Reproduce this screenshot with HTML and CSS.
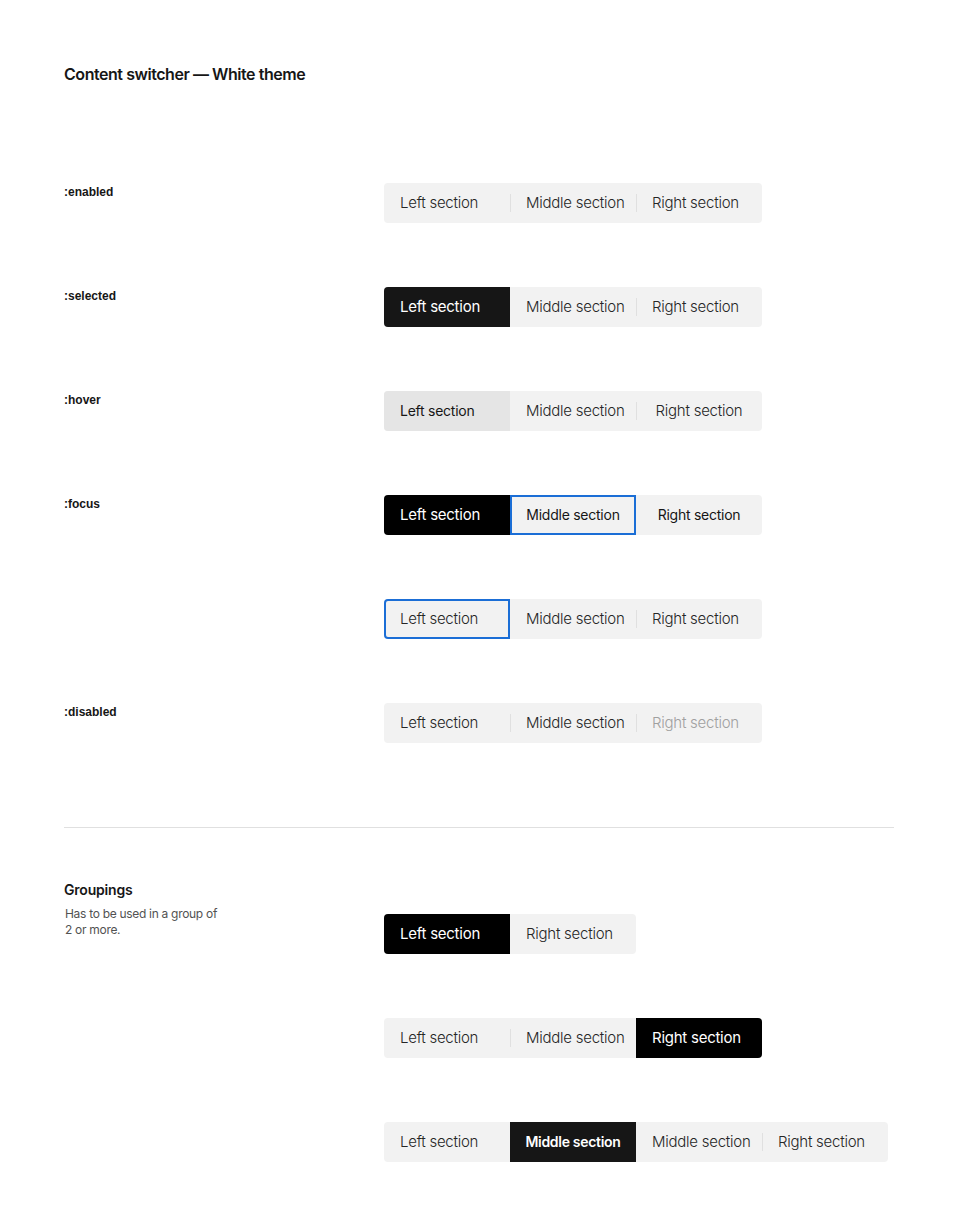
FILE: index.html
```html
<!DOCTYPE html>
<html lang="en">
  <head>
    <meta charset="UTF-8" />
    <meta name="viewport" content="width=device-width, initial-scale=1.0" />
    <title>Content switcher — White theme</title>
    <link rel="stylesheet" href="styles.css">
  </head>
  <body>
    <main class="page">
      <h1 class="title">Content switcher — White theme</h1>

      <section class="states">
        <div class="state-label">:enabled</div>
        <div class="switcher">
          <span class="seg">Left section</span>
          <span class="seg sep">Middle section</span>
          <span class="seg sep">Right section</span>
        </div>

        <div class="state-label">:selected</div>
        <div class="switcher">
          <span class="seg selected">Left section</span>
          <span class="seg">Middle section</span>
          <span class="seg sep">Right section</span>
        </div>

        <div class="state-label">:hover</div>
        <div class="switcher">
          <span class="seg hover">Left section</span>
          <span class="seg">Middle section</span>
          <span class="seg sep center">Right section</span>
        </div>

        <div class="state-label">:focus</div>
        <div class="switcher">
          <span class="seg selected black">Left section</span>
          <span class="seg focus center regular">Middle section</span>
          <span class="seg center regular">Right section</span>
        </div>

        <div class="state-label"></div>
        <div class="switcher">
          <span class="seg focus">Left section</span>
          <span class="seg">Middle section</span>
          <span class="seg sep">Right section</span>
        </div>

        <div class="state-label">:disabled</div>
        <div class="switcher">
          <span class="seg">Left section</span>
          <span class="seg sep">Middle section</span>
          <span class="seg sep disabled">Right section</span>
        </div>
      </section>

      <hr class="divider" />

      <section class="groupings">
        <div class="group-info">
          <h2>Groupings</h2>
          <p>Has to be used in a group of<br />2 or more.</p>
        </div>
        <div class="group-list">
          <div class="switcher">
            <span class="seg selected black">Left section</span>
            <span class="seg">Right section</span>
          </div>
          <div class="switcher">
            <span class="seg">Left section</span>
            <span class="seg sep">Middle section</span>
            <span class="seg selected black">Right section</span>
          </div>
          <div class="switcher">
            <span class="seg">Left section</span>
            <span class="seg selected center bold">Middle section</span>
            <span class="seg">Middle section</span>
            <span class="seg sep">Right section</span>
          </div>
        </div>
      </section>
    </main>
  </body>
</html>
```

FILE: styles.css
```css
* {
  box-sizing: border-box;
}

body {
  margin: 0;
  background-color: #ffffff;
  color: #161616;
  font-family: Inter, "Noto Sans", sans-serif;
}

.page {
  padding: 64px 64px 60px 64px;
}

.title {
  margin: 0;
  font-size: 16px;
  line-height: 20px;
  font-weight: 600;
  letter-spacing: -0.45px;
}

.states {
  margin-top: 99px;
  display: grid;
  grid-template-columns: 320px 1fr;
  row-gap: 64px;
}

.state-label {
  font-family: "Liberation Sans", Arial, sans-serif;
  font-size: 12px;
  font-weight: 700;
  line-height: 16px;
  padding-top: 1px;
  color: #161616;
}

/* switcher */
.switcher {
  display: flex;
  width: max-content;
  height: 40px;
  background-color: #f2f2f2;
  border-radius: 4px;
}

.seg {
  position: relative;
  display: flex;
  align-items: center;
  width: 126px;
  height: 40px;
  padding: 0 16px 2px 16px;
  font-size: 15px;
  font-weight: 300;
  letter-spacing: -0.25px;
  color: #262626;
  white-space: nowrap;
}

.seg:first-child {
  border-radius: 4px 0 0 4px;
}

.seg:last-child {
  border-radius: 0 4px 4px 0;
}

.seg.sep::before {
  content: "";
  position: absolute;
  left: 0;
  top: 11px;
  height: 18px;
  width: 1px;
  background-color: #e0e0e0;
}

.seg.center {
  justify-content: center;
  padding: 0 0 2px 0;
}

.seg.regular {
  font-size: 14px;
  font-weight: 400;
  color: #161616;
}

.seg.selected {
  background-color: #161616;
  color: #ffffff;
  font-weight: 400;
}

.seg.black {
  background-color: #000000;
}

.seg.bold {
  font-size: 14px;
  font-weight: 600;
  letter-spacing: -0.3px;
}

.seg.hover {
  background-color: #e5e5e5;
  font-size: 14px;
  font-weight: 400;
  color: #161616;
}

.seg.focus {
  box-shadow: inset 0 0 0 2px #1b6ed6;
}

.seg.disabled {
  color: #a0a0a0;
}

.divider {
  margin: 84px 0 0 0;
  border: 0;
  height: 1px;
  background-color: #e0e0e0;
}

.groupings {
  margin-top: 53px;
  display: grid;
  grid-template-columns: 320px 1fr;
}

.group-info h2 {
  margin: 0;
  font-size: 14px;
  line-height: 18px;
  font-weight: 600;
  letter-spacing: -0.2px;
}

.group-info p {
  margin: 7px 0 0 1px;
  font-size: 12px;
  line-height: 16px;
  letter-spacing: -0.3px;
  color: #525252;
}

.group-list {
  padding-top: 33px;
  display: flex;
  flex-direction: column;
  gap: 64px;
}
```
